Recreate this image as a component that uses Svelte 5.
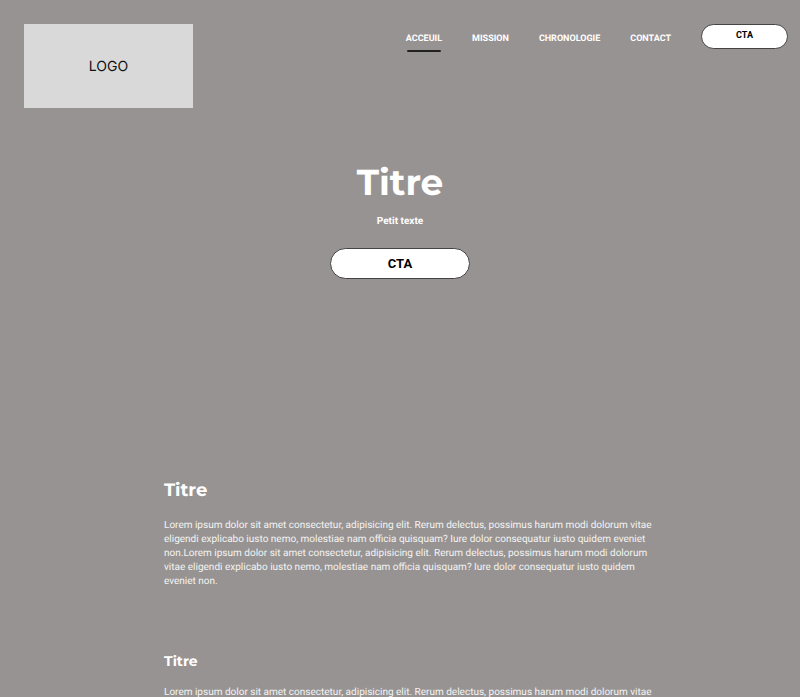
<script>
  const links = [
    { label: 'ACCEUIL', active: true },
    { label: 'MISSION' },
    { label: 'CHRONOLOGIE' },
    { label: 'CONTACT' },
  ];
  const lorem =
    'Lorem ipsum dolor sit amet consectetur, adipisicing elit. Rerum delectus, possimus harum modi dolorum vitae eligendi explicabo iusto nemo, molestiae nam officia quisquam? Iure dolor consequatur iusto quidem eveniet non.';
</script>

<header>
  <a class="logo" href="#accueil">LOGO</a>
  <nav>
    {#each links as link}
      <a href="#{link.label.toLowerCase()}" class:active={link.active}>{link.label}</a>
    {/each}
    <button class="pill small" type="button">CTA</button>
  </nav>
</header>

<main>
  <section class="hero">
    <h1>Titre</h1>
    <p>Petit texte</p>
    <button class="pill" type="button">CTA</button>
  </section>
  <section class="block">
    <h2>Titre</h2>
    <p>{lorem}{lorem}</p>
  </section>
  <section class="block">
    <h3>Titre</h3>
    <p>{lorem}{lorem}</p>
  </section>
</main>

<style>
  :global(body) {
    background: #979392;
    color: #fff;
    font-family: Roboto, sans-serif;
    text-rendering: geometricPrecision;
  }
  header {
    display: flex;
    justify-content: space-between;
    align-items: flex-start;
    padding: 24px 12px 0 24px;
  }
  .logo {
    display: flex;
    align-items: center;
    justify-content: center;
    width: 169px;
    height: 84px;
    background: #d9d9d9;
    color: #111;
    font: 14px/17px Inter, sans-serif;
    text-decoration: none;
  }
  nav {
    display: flex;
    align-items: flex-start;
    gap: 30px;
  }
  nav a {
    padding-top: 9px;
    color: #fff;
    font-size: 9px;
    line-height: 12px;
    font-weight: 700;
    text-decoration: none;
  }
  nav a.active::after {
    content: "";
    display: block;
    height: 2px;
    margin: 5px 1px 0;
    border-radius: 1px;
    background: #222;
  }
  .pill {
    width: 140px;
    height: 31px;
    padding: 0;
    border: 1px solid #444;
    border-radius: 16px;
    background: #fff;
    color: #000;
    font: 700 13px Roboto, sans-serif;
  }
  .pill.small {
    width: 87px;
    height: 25px;
    padding-bottom: 3px;
    font-size: 9px;
  }
  .hero {
    display: flex;
    flex-direction: column;
    align-items: center;
    padding: 52px 0 200px;
  }
  h1, h2, h3 {
    margin: 0;
    font-family: Montserrat, "Open Sans", sans-serif;
    font-weight: 700;
  }
  h1 {
    font-size: 36px;
    line-height: 46px;
  }
  .hero p {
    margin: 9px 0 19px;
    font-size: 10px;
    line-height: 14px;
    font-weight: 700;
  }
  .block {
    max-width: 496px;
    margin: 0 17% 63px 164px;
  }
  .block:last-child {
    margin-bottom: 0;
  }
  h2 {
    font-size: 18px;
    line-height: 22px;
  }
  h3 {
    font-size: 14px;
    line-height: 18px;
  }
  .block p {
    margin: 18px 0 0;
    color: #f4f3f3;
    font-size: 10px;
    line-height: 14px;
  }
  .block h3 + p {
    margin-top: 16px;
  }
</style>
